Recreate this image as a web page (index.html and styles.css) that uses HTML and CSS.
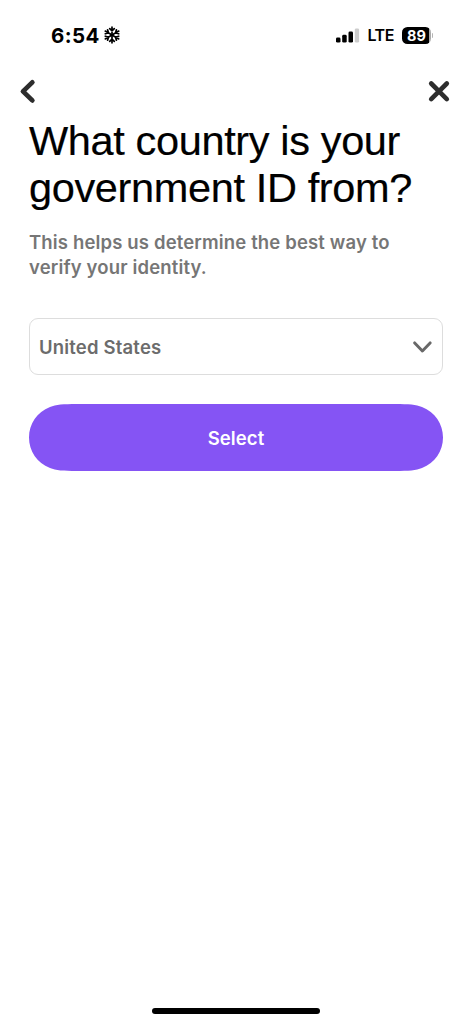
FILE: index.html
```html
<!DOCTYPE html>
<html lang="en">
<head>
<meta charset="utf-8">
<title>Verify identity</title>
<link rel="stylesheet" href="styles.css">
</head>
<body>
<div class="screen">
  <header class="status">
    <div class="clock">
      <span class="time">6:54</span>
      <svg class="snow" width="16" height="18" viewBox="0 0 16 18" fill="none" stroke="#000" stroke-width="1.7" stroke-linecap="round">
        <g id="axis"><path d="M8 1.2V16.8M5.7 2.6L8 4.9l2.3-2.3M5.7 15.4L8 13.1l2.3 2.3"/></g>
        <use href="#axis" transform="rotate(60 8 9)"/>
        <use href="#axis" transform="rotate(120 8 9)"/>
      </svg>
    </div>
    <div class="signals">
      <svg width="24" height="15" viewBox="0 0 24 15">
        <rect x="0" y="9.6" width="4.5" height="5" rx="1.4"/>
        <rect x="6.2" y="6.8" width="4.5" height="7.8" rx="1.4"/>
        <rect x="12.5" y="3.6" width="4.5" height="11" rx="1.4"/>
        <rect x="18.8" y="0.4" width="4.3" height="14.2" rx="1.4" fill="#ccc"/>
      </svg>
      <span class="network">LTE</span>
      <div class="battery"><span class="level">89</span><span class="tip"></span></div>
    </div>
  </header>
  <nav class="nav">
    <svg width="18" height="26" viewBox="0 0 18 26" fill="none" stroke="#2d2d2d" stroke-width="4.8" stroke-linecap="round" stroke-linejoin="round"><path d="M13.3 4.4L4 13.4L13.3 22.4"/></svg>
    <svg width="24" height="24" viewBox="0 0 24 24" fill="none" stroke="#2d2d2d" stroke-width="4.6" stroke-linecap="round"><path d="M4.2 4.5L19.8 20.1M19.8 4.5L4.2 20.1"/></svg>
  </nav>
  <main class="content">
    <h1 class="title">What country is your<br>government ID from?</h1>
    <p class="hint">This helps us determine the best way to<br>verify your identity.</p>
    <div class="select">
      <span class="value">United States</span>
      <svg width="20" height="14" viewBox="0 0 20 14" fill="none" stroke="#686868" stroke-width="2.9" stroke-linecap="round" stroke-linejoin="round"><path d="M2.7 2.9L10.4 11L18.1 2.9"/></svg>
    </div>
    <button class="submit">
      <svg class="shape" width="414" height="67" viewBox="0 0 414 67"><path fill="#8554f4" d="M48 0H366C380 0 387 .6 393 3C406 8 414 20 414 33.5C414 47 406 59 393 64C387 66.4 380 67 366 67H48C34 67 27 66.4 21 64C8 59 0 47 0 33.5C0 20 8 8 21 3C27 .6 34 0 48 0Z"/></svg>
      <span class="label">Select</span>
    </button>
  </main>
  <div class="home"></div>
</div>
</body>
</html>
```
FILE: styles.css
```css
body { margin: 0; background: #fff; font-family: Inter, "Liberation Sans", sans-serif; color: #000; }
.screen { box-sizing: border-box; width: 472px; height: 1024px; display: flex; flex-direction: column; padding-bottom: 10px; }
.status { height: 70px; box-sizing: border-box; display: flex; justify-content: space-between; align-items: center; padding: 0 39px 0 51px; }
.clock, .signals { display: flex; align-items: center; }
.clock { gap: 4px; }
.time { font-size: 20.5px; font-weight: 700; letter-spacing: 0.4px; }
.network { margin-left: 7px; font-size: 16px; line-height: 20px; font-weight: 600; letter-spacing: -0.4px; }
.battery { display: flex; align-items: center; margin-left: 8px; gap: 1px; }
.level { width: 29px; height: 17px; border-radius: 5.5px; background: linear-gradient(90deg, #000 27px, #aaa 27px); color: #fff; font-size: 14.5px; line-height: 17px; font-weight: 700; text-align: center; }
.tip { width: 1px; height: 5px; border-radius: 0 1px 1px 0; background: #b5b5b5; }
.nav { height: 42px; display: flex; justify-content: space-between; align-items: center; padding: 0 21px 0 19px; }
.content { flex: 1; padding: 5px 29px 0; }
.title { margin: 0; font-family: "Liberation Sans", Arial, sans-serif; font-weight: 400; font-size: 41.5px; line-height: 47px; letter-spacing: -0.36px; -webkit-text-stroke: 0.2px #000; white-space: nowrap; }
.hint { margin: 19px 0 0; font-size: 18.5px; line-height: 24.5px; font-weight: 600; letter-spacing: 0.15px; color: #767676; white-space: nowrap; }
.select { box-sizing: border-box; height: 57px; margin-top: 39px; padding: 0 10px 0 9px; display: flex; align-items: center; justify-content: space-between; border: 1px solid #ddd; border-radius: 9px; font-size: 18.5px; font-weight: 600; color: #6c6c6c; }
.value { letter-spacing: 0.18px; }
.submit { position: relative; display: flex; align-items: center; justify-content: center; width: 414px; height: 67px; margin: 29px 0 0; padding: 0; border: 0; background: none; font-family: inherit; }
.shape { position: absolute; inset: 0; }
.label { position: relative; font-size: 18.5px; line-height: 22px; font-weight: 600; letter-spacing: 0.1px; color: #fff; }
.home { width: 168px; height: 6px; margin: 0 auto; border-radius: 3px; background: #000; }
```
